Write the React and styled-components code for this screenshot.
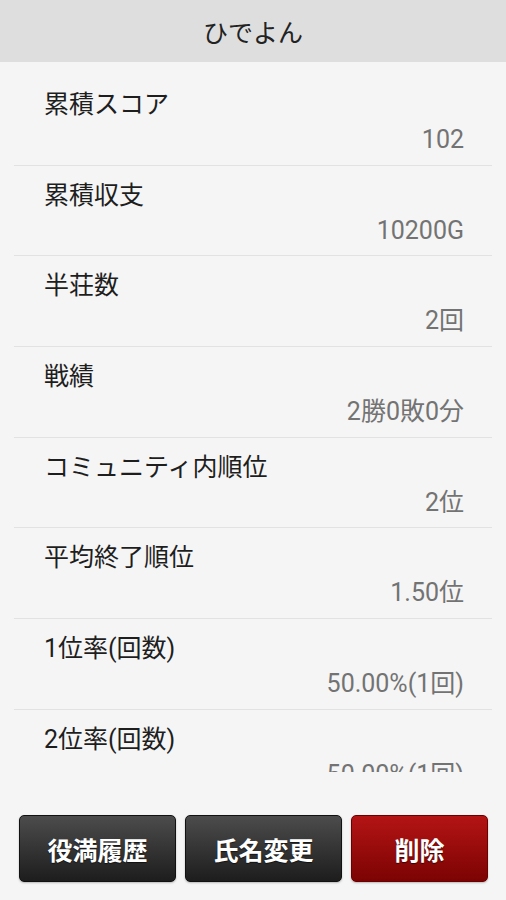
import styled, { createGlobalStyle } from "styled-components";

const GlobalStyle = createGlobalStyle`
  html, body {
    margin: 0;
    padding: 0;
    background: #f5f5f5;
  }
  body {
    font-family: Roboto, "Noto Sans CJK JP", sans-serif;
  }
`;

const Screen = styled.div`
  display: flex;
  flex-direction: column;
  width: 506px;
  height: 900px;
  background: #f5f5f5;
  overflow: hidden;
`;

const Header = styled.header`
  flex: 0 0 62px;
  display: flex;
  align-items: center;
  justify-content: center;
  background: #dedede;
  color: #222;
  font-size: 25px;
`;

const StatList = styled.ul`
  flex: 1;
  margin: 0;
  padding: 13px 14px 0;
  list-style: none;
  overflow: hidden;
`;

const Row = styled.li`
  box-sizing: border-box;
  height: 90.67px;
  padding: 15px 28px 0 30px;
  border-bottom: 1px solid #e2e2e2;
  display: flex;
  flex-direction: column;
`;

const Label = styled.span`
  font-size: 25px;
  line-height: 30px;
  color: #1e1e1e;
`;

const Value = styled.span`
  margin-top: 5px;
  font-size: 25px;
  line-height: 30px;
  color: #737373;
  text-align: right;
`;

const Footer = styled.footer`
  flex: 0 0 auto;
  display: flex;
  gap: 9px;
  padding: 43px 18px 18px 19px;
  background: #f5f5f5;
`;

const Button = styled.button`
  flex: ${(p) => (p.$danger ? "0 0 137px" : "0 0 157px")};
  height: 67px;
  border-radius: 5px;
  border: 1px solid ${(p) => (p.$danger ? "#6a0000" : "#111")};
  background: ${(p) =>
    p.$danger
      ? "linear-gradient(#b41414, #7c0303)"
      : "linear-gradient(#4c4c4c, #1d1d1d)"};
  box-shadow: 0 1px 2px rgba(0, 0, 0, 0.25);
  color: #fff;
  font-family: "Noto Sans CJK JP", sans-serif;
  font-size: 25px;
  line-height: 30px;
  font-weight: 700;
  text-shadow: 0 1px 1px rgba(0, 0, 0, 0.6);
  padding: 0;
`;

const stats = [
  ["累積スコア", "102"],
  ["累積収支", "10200G"],
  ["半荘数", "2回"],
  ["戦績", "2勝0敗0分"],
  ["コミュニティ内順位", "2位"],
  ["平均終了順位", "1.50位"],
  ["1位率(回数)", "50.00%(1回)"],
  ["2位率(回数)", "50.00%(1回)"],
  ["3位率(回数)", "0.00%(0回)"],
];

export default function App() {
  return (
    <>
      <GlobalStyle />
      <Screen>
        <Header>ひでよん</Header>
        <StatList>
          {stats.map(([label, value]) => (
            <Row key={label}>
              <Label>{label}</Label>
              <Value>{value}</Value>
            </Row>
          ))}
        </StatList>
        <Footer>
          <Button>役満履歴</Button>
          <Button>氏名変更</Button>
          <Button $danger>削除</Button>
        </Footer>
      </Screen>
    </>
  );
}
